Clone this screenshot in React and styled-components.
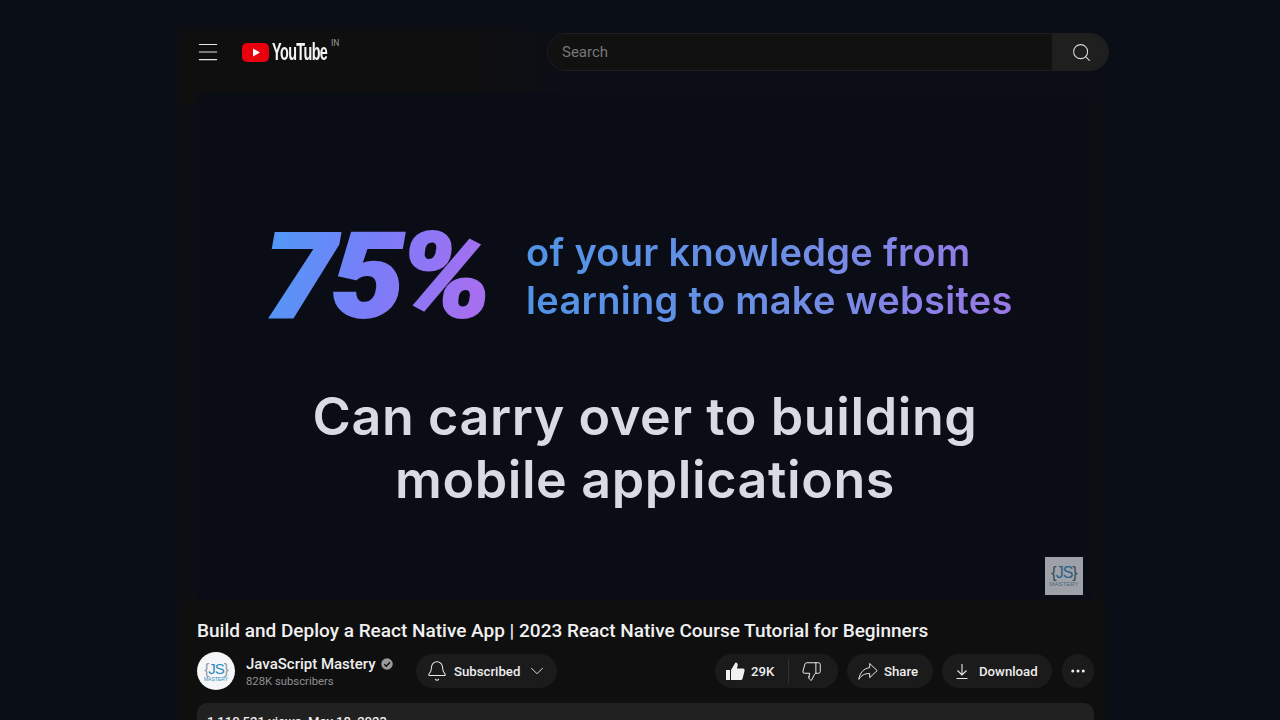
import React from "react"
import styled, { createGlobalStyle } from "styled-components"
import { Menu, Search, Bell, ChevronDown, ThumbsDown, MoreHorizontal } from "lucide-react"

const Global = createGlobalStyle`
  html, body {
    margin: 0;
    height: 100%;
    overflow: hidden;
    background: #0a0e17;
  }
`

const Page = styled.div`
  width: 1280px;
  height: 720px;
  overflow: hidden;
  display: flex;
  padding-left: 178px;
  box-sizing: border-box;
  background: #0a0e17;
  font-family: Roboto, "Liberation Sans", sans-serif;
`

const Frame = styled.div`
  width: 928px;
  height: 720px;
  flex: none;
  background: linear-gradient(180deg, #0c0e13 0, #0c0e13 590px, #0f0f10 604px);
`

const TopBar = styled.header`
  height: 104px;
  margin-bottom: -11px;
  padding-left: 21px;
  box-sizing: border-box;
  display: flex;
  align-items: center;
  background:
    linear-gradient(180deg, #0a0e17 0, #0a0e17 24px, rgba(10, 14, 23, 0) 34px),
    linear-gradient(90deg, #0f0f10 0, #0f0f10 300px, #0b0e17 400px);
`

const MenuButton = styled.div`
  width: 18px;
  height: 18px;
  flex: none;
  display: flex;
  align-items: center;
  justify-content: center;
  color: #e6e6e6;
  margin-right: 25px;
  svg {
    flex: none;
  }
`

const Logo = styled.div`
  display: flex;
  align-items: center;
  width: 305px;
  flex: none;
  position: relative;
`

const LogoWord = styled.span`
  font-family: "Liberation Sans", sans-serif;
  font-size: 24px;
  font-weight: 700;
  letter-spacing: -1px;
  color: #f4f4f4;
  margin-left: 3px;
  width: 55px;
  transform: scaleX(0.6);
  transform-origin: left center;
  display: inline-block;
  white-space: nowrap;
`

const Region = styled.sup`
  position: absolute;
  left: 89px;
  top: 0;
  font-size: 8.5px;
  line-height: 10px;
  color: #9a9a9a;
`

const SearchBox = styled.div`
  width: 562px;
  height: 38px;
  flex: none;
  display: flex;
  border: 1px solid #1f1f1f;
  border-radius: 19px;
  overflow: hidden;
  box-sizing: border-box;
`

const SearchInput = styled.div`
  flex: 1;
  background: #111111;
  color: #787878;
  font-size: 15px;
  line-height: 36px;
  padding-left: 14px;
`

const SearchButton = styled.div`
  width: 56px;
  padding-left: 3px;
  box-sizing: border-box;
  background: #1f1f1f;
  color: #d8d8d8;
  display: flex;
  align-items: center;
  justify-content: center;
`

const Video = styled.section`
  width: 896px;
  height: 507px;
  margin-left: 19px;
  background: #0a0d16;
  position: relative;
  display: flex;
  flex-direction: column;
  box-sizing: border-box;
  padding-top: 129px;
`

const StatRow = styled.div`
  display: flex;
  align-items: center;
  padding-left: 72px;
  height: 100px;
`

const Percent = styled.div`
  font-family: Roboto, sans-serif;
  font-size: 118px;
  font-weight: 900;
  font-style: italic;
  letter-spacing: -5px;
  line-height: 100px;
  width: 257px;
  flex: none;
  white-space: nowrap;
  transform: translate(-5px, 5px) scaleX(1.1);
  transform-origin: left center;
  -webkit-text-stroke: 2px transparent;
  background: linear-gradient(100deg, #4d9bf7 0%, #7b7cf8 40%, #a66ff0 75%);
  -webkit-background-clip: text;
  background-clip: text;
  color: transparent;
`

const StatText = styled.div`
  font-family: Inter, sans-serif;
  font-size: 38px;
  font-weight: 600;
  letter-spacing: 0.3px;
  line-height: 48px;
  margin-top: 8px;
  white-space: nowrap;
  width: fit-content;
  background: linear-gradient(90deg, #4f94e6 0%, #6f8ee6 55%, #9a78e6 100%);
  -webkit-background-clip: text;
  background-clip: text;
  color: transparent;
`

const Headline = styled.div`
  margin-top: 63px;
  text-align: center;
  font-family: Inter, sans-serif;
  font-size: 52px;
  font-weight: 600;
  letter-spacing: 0.6px;
  line-height: 63px;
  color: #d9dbe2;
`

const Watermark = styled.div`
  position: absolute;
  right: 10px;
  bottom: 5px;
  width: 38px;
  height: 38px;
  background: #9ea2a8;
  display: flex;
  flex-direction: column;
  align-items: center;
  justify-content: center;
  font-family: "Liberation Sans", sans-serif;
`

const Mark = styled.span`
  font-size: ${p => p.$size}px;
  line-height: ${p => p.$size}px;
  letter-spacing: -1px;
  color: ${p => p.$brace};
`

const MarkLetters = styled.span`
  color: ${p => p.$color};
`

const MarkSub = styled.span`
  font-size: ${p => p.$size}px;
  line-height: ${p => p.$size + 1}px;
  color: ${p => p.$color};
`

const Title = styled.h1`
  margin: 19px 0 0 19px;
  font-size: 19px;
  line-height: 24px;
  font-weight: 500;
  color: #f1f1f1;
  white-space: nowrap;
`

const MetaRow = styled.div`
  margin: 9px 0 0 19px;
  height: 38px;
  width: 897px;
  display: flex;
  align-items: center;
`

const Avatar = styled.div`
  width: 38px;
  height: 38px;
  border-radius: 50%;
  background: #f5f6f7;
  display: flex;
  flex-direction: column;
  align-items: center;
  justify-content: center;
  flex: none;
  font-family: "Liberation Sans", sans-serif;
`

const Channel = styled.div`
  margin-left: 11px;
  padding-top: 1px;
  width: 170px;
  flex: none;
`

const ChannelName = styled.div`
  display: flex;
  align-items: center;
  gap: 5px;
  font-size: 15px;
  line-height: 20px;
  font-weight: 500;
  color: #eeeeee;
`

const Subscribers = styled.div`
  font-size: 11.3px;
  line-height: 16px;
  color: #8f8f8f;
`

const Pill = styled.div`
  height: 34px;
  border-radius: 17px;
  background: #1b1b1b;
  color: #eeeeee;
  display: flex;
  align-items: center;
  font-size: 13.2px;
  font-weight: 500;
  white-space: nowrap;
  box-sizing: border-box;
  flex: none;
  gap: ${p => p.$gap || 8}px;
  padding: ${p => p.$padding || "0 14px"};
  width: ${p => p.$width}px;
  margin-left: ${p => p.$left || 0}px;
  justify-content: ${p => (p.$center ? "center" : "flex-start")};
  svg {
    flex: none;
  }
`

const Divider = styled.span`
  width: 1px;
  height: 24px;
  background: #333333;
  margin: 0 6px 0 8px;
`

const Details = styled.div`
  margin: 13px 0 0 19px;
  width: 897px;
  height: 60px;
  padding: 10px 10px;
  box-sizing: border-box;
  border-radius: 10px;
  background: #212121;
  color: #eeeeee;
  font-size: 13.1px;
  font-weight: 500;
  line-height: 18px;
`

const PlayMark = () => (
  <svg width="27" height="19" viewBox="0 0 27 19">
    <rect x="0" y="0" width="27" height="19" rx="5" fill="#e8000f" />
    <path d="M11 5.5 L18 9.5 L11 13.5 Z" fill="#fff" />
  </svg>
)

const VerifiedMark = () => (
  <svg width="12" height="12" viewBox="0 0 24 24">
    <circle cx="12" cy="12" r="11.5" fill="#9a9a9a" />
    <path d="M6.5 12.5 L10.5 16.5 L18 8.5" fill="none" stroke="#0e0f11" strokeWidth="2.6" />
  </svg>
)

const LikeMark = () => (
  <svg width="20" height="20" viewBox="0 0 20 20" fill="#f1f1f1">
    <rect x="1" y="9" width="4" height="10" />
    <path d="M6 9 L10.5 1.5 C12.5 1.5 13 3 12.7 4.6 L12 7.5 L18 7.5 C19.4 7.5 19.8 8.8 19.5 10 L17.6 17.5 C17.3 18.6 16.5 19 15.5 19 L6 19 Z" />
  </svg>
)

const ShareMark = () => (
  <svg width="20" height="20" viewBox="0 0 24 24" fill="none" stroke="#e6e6e6" strokeWidth="1.2" strokeLinejoin="round">
    <path d="M14 3 L23 11.5 L14 20 L14 15 C8 15 4 17 1 22 C2 14 7 9 14 8 Z" />
  </svg>
)

const DownloadMark = () => (
  <svg width="14" height="17" viewBox="0 0 14 17" fill="none" stroke="#e6e6e6" strokeWidth="1.1">
    <path d="M7 1 L7 12 M2.5 7.5 L7 12 L11.5 7.5 M1.5 15.5 L12.5 15.5" />
  </svg>
)

const JsMark = ({ size, brace, color, subSize, subColor }) => (
  <>
    <Mark $size={size} $brace={brace}>
      {"{"}
      <MarkLetters $color={color}>JS</MarkLetters>
      {"}"}
    </Mark>
    <MarkSub $size={subSize} $color={subColor}>MASTERY</MarkSub>
  </>
)

export default function App() {
  return (
    <Page>
      <Global />
      <Frame>
        <TopBar>
          <MenuButton>
            <Menu size={26} strokeWidth={1} />
          </MenuButton>
          <Logo>
            <PlayMark />
            <LogoWord>YouTube</LogoWord>
            <Region>IN</Region>
          </Logo>
          <SearchBox>
            <SearchInput>Search</SearchInput>
            <SearchButton>
              <Search size={21} strokeWidth={1.2} />
            </SearchButton>
          </SearchBox>
        </TopBar>
        <Video>
          <StatRow>
            <Percent>75%</Percent>
            <StatText>
              of your knowledge from
              <br />
              learning to make websites
            </StatText>
          </StatRow>
          <Headline>
            Can carry over to building
            <br />
            mobile applications
          </Headline>
          <Watermark>
            <JsMark size={16} brace="#3a4652" color="#2b5f86" subSize={6} subColor="#4c6a80" />
          </Watermark>
        </Video>
        <Title>Build and Deploy a React Native App | 2023 React Native Course Tutorial for Beginners</Title>
        <MetaRow>
          <Avatar>
            <JsMark size={15} brace="#8a98a4" color="#2e8bc0" subSize={5} subColor="#2e8bc0" />
          </Avatar>
          <Channel>
            <ChannelName>
              JavaScript Mastery
              <VerifiedMark />
            </ChannelName>
            <Subscribers>828K subscribers</Subscribers>
          </Channel>
          <Pill $width={141} $gap={6} $padding="0 10px">
            <Bell size={22} strokeWidth={1.1} />
            Subscribed
            <ChevronDown size={22} strokeWidth={1} />
          </Pill>
          <Pill $left={158} $width={123} $padding="0 10px" $gap={6}>
            <LikeMark />
            29K
            <Divider />
            <ThumbsDown size={21} strokeWidth={1.1} />
          </Pill>
          <Pill $left={9} $width={86} $padding="0 11px" $gap={6}>
            <ShareMark />
            Share
          </Pill>
          <Pill $left={9} $width={110} $padding="0 13px" $gap={10}>
            <DownloadMark />
            Download
          </Pill>
          <Pill $left={10} $width={32} $padding="0" $center>
            <MoreHorizontal size={18} strokeWidth={2} />
          </Pill>
        </MetaRow>
        <Details>1,110,521 views&nbsp; May 18, 2023</Details>
      </Frame>
    </Page>
  )
}
